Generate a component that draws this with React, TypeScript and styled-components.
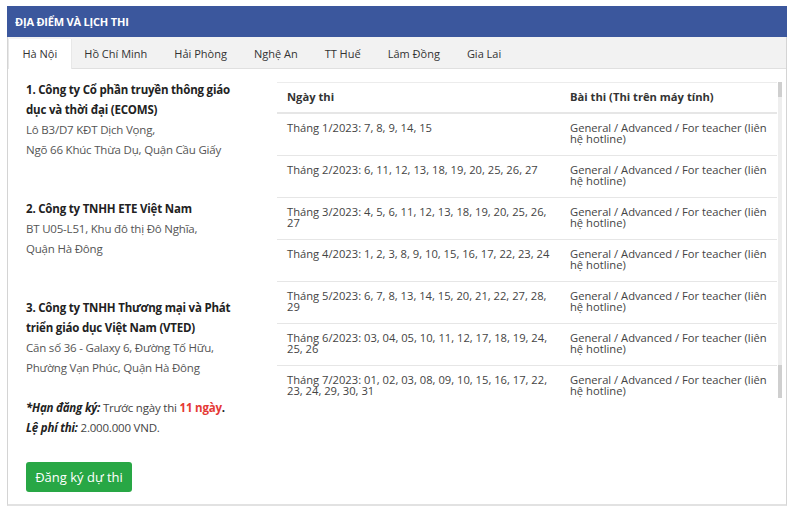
import React from 'react'
import styled, { createGlobalStyle } from 'styled-components'

const GlobalStyle = createGlobalStyle`
  body {
    margin: 0;
    background: #fff;
    font-family: 'Open Sans', 'Noto Sans', Arial, sans-serif;
  }
  * { box-sizing: border-box; }
`

const tabs = ['Hà Nội', 'Hồ Chí Minh', 'Hải Phòng', 'Nghệ An', 'TT Huế', 'Lâm Đồng', 'Gia Lai']

const places = [
  {
    name: '1. Công ty Cổ phần truyền thông giáo dục và thời đại (ECOMS)',
    lines: ['Lô B3/D7 KĐT Dịch Vọng,', 'Ngõ 66 Khúc Thừa Dụ, Quận Cầu Giấy'],
  },
  {
    name: '2. Công ty TNHH ETE Việt Nam',
    lines: ['BT U05-L51, Khu đô thị Đô Nghĩa,', 'Quận Hà Đông'],
  },
  {
    name: '3. Công ty TNHH Thương mại và Phát triển giáo dục Việt Nam (VTED)',
    lines: ['Căn số 36 - Galaxy 6, Đường Tố Hữu,', 'Phường Vạn Phúc, Quận Hà Đông'],
  },
]

const exam = 'General / Advanced / For teacher (liên hệ hotline)'

const schedule = [
  'Tháng 1/2023: 7, 8, 9, 14, 15',
  'Tháng 2/2023: 6, 11, 12, 13, 18, 19, 20, 25, 26, 27',
  'Tháng 3/2023: 4, 5, 6, 11, 12, 13, 18, 19, 20, 25, 26, 27',
  'Tháng 4/2023: 1, 2, 3, 8, 9, 10, 15, 16, 17, 22, 23, 24',
  'Tháng 5/2023: 6, 7, 8, 13, 14, 15, 20, 21, 22, 27, 28, 29',
  'Tháng 6/2023: 03, 04, 05, 10, 11, 12, 17, 18, 19, 24, 25, 26',
  'Tháng 7/2023: 01, 02, 03, 08, 09, 10, 15, 16, 17, 22, 23, 24, 29, 30, 31',
  'Tháng 8/2023: 05, 06, 07, 12, 13, 14, 19, 20, 21, 26, 27, 28',
]

export default function App() {
  return (
    <>
      <GlobalStyle />
      <Card>
        <CardHeader>ĐỊA ĐIỂM VÀ LỊCH THI</CardHeader>
        <TabBar>
          {tabs.map((tab, index) => (
            <Tab key={tab} active={index === 0}>
              {tab}
            </Tab>
          ))}
        </TabBar>
        <Body>
          <Info>
            {places.map((place, index) => (
              <Place key={place.name} last={index === places.length - 1}>
                <PlaceName>{place.name}</PlaceName>
                {place.lines.map(line => (
                  <div key={line}>{line}</div>
                ))}
              </Place>
            ))}
            <Note>
              <b>
                <i>*Hạn đăng ký:</i>
              </b>{' '}
              Trước ngày thi <Red>11 ngày</Red>
              <b>.</b>
            </Note>
            <Note>
              <b>
                <i>Lệ phí thi:</i>
              </b>{' '}
              2.000.000 VND.
            </Note>
            <RegisterButton>Đăng ký dự thi</RegisterButton>
          </Info>
          <TableWrap>
            <TableScroll>
              <Table>
                <thead>
                  <tr>
                    <Th style={{ width: 283 }}>Ngày thi</Th>
                    <Th>Bài thi (Thi trên máy tính)</Th>
                  </tr>
                </thead>
                <tbody>
                  {schedule.map(date => (
                    <tr key={date}>
                      <Td>{date}</Td>
                      <Td>{exam}</Td>
                    </tr>
                  ))}
                </tbody>
              </Table>
            </TableScroll>
            <ScrollTrack />
          </TableWrap>
        </Body>
      </Card>
    </>
  )
}

const Card = styled.div`
  width: 780px;
  margin: 6px 0 0 7px;
  border: 1px solid #d4d4d4;
  border-top: none;
  border-bottom: 2px solid #e2e2e2;
  background: #fff;
`

const CardHeader = styled.div`
  height: 31px;
  margin: 0 -1px;
  padding: 0 8px;
  display: flex;
  align-items: center;
  background: #3b579d;
  color: #fff;
  font-size: 11px;
  font-weight: 700;
  letter-spacing: -0.2px;
`

const TabBar = styled.div`
  display: flex;
  height: 32px;
  padding: 2px 0 0 1px;
  background: #f2f2f2;
  border-bottom: 1px solid #e0e0e0;
`

const Tab = styled.div<{ active?: boolean }>`
  padding: 0 13.5px 2px;
  display: flex;
  align-items: center;
  font-size: 11px;
  color: #333;
  background: ${props => (props.active ? '#fff' : 'transparent')};
  margin-bottom: -1px;
  box-shadow: ${props => (props.active ? '1px 0 0 #e8e8e8, -1px 0 0 #e8e8e8' : 'none')};
`

const Body = styled.div`
  display: flex;
  align-items: flex-start;
  padding: 11px 4px 12px 18px;
`

const Info = styled.div`
  width: 224px;
  flex-shrink: 0;
  margin-right: 27px;
  font-size: 11.5px;
  letter-spacing: -0.2px;
  line-height: 20px;
  color: #555;
`

const Place = styled.div<{ last?: boolean }>`
  margin-bottom: ${props => (props.last ? '20px' : '39px')};
`

const PlaceName = styled.div`
  font-weight: 700;
  color: #222;
`

const Note = styled.div`
  color: #444;

  b {
    color: #222;
  }
`

const Red = styled.b`
  && {
    color: #e53935;
  }
`

const RegisterButton = styled.button`
  margin-top: 24px;
  height: 30px;
  width: 106px;
  border: none;
  border-radius: 3px;
  background: #28a745;
  color: #fff;
  font-family: inherit;
  font-size: 13px;
  cursor: pointer;
`

const TableWrap = styled.div`
  flex: 1;
  position: relative;
  margin-top: 2px;
  padding-right: 5px;
`

const TableScroll = styled.div`
  max-height: 316px;
  overflow-y: auto;
  scrollbar-width: none;
  border-top: 1px solid #ececec;

  &::-webkit-scrollbar {
    display: none;
  }
`

const ScrollTrack = styled.div`
  position: absolute;
  top: 0;
  right: 0;
  bottom: 0;
  width: 4px;
  background: linear-gradient(
    to bottom,
    #cfcfcf 0,
    #cfcfcf 15px,
    #eeeeee 15px,
    #eeeeee calc(100% - 33px),
    #cfcfcf calc(100% - 33px),
    #cfcfcf 100%
  );
`

const Table = styled.table`
  width: 100%;
  border-collapse: collapse;
  font-size: 11.2px;
  color: #444;
`

const Th = styled.th`
  text-align: left;
  font-weight: 700;
  color: #333;
  padding: 8px 10px 10px;
  line-height: 11px;
  border-bottom: 2px solid #e6e6e6;
`

const Td = styled.td`
  vertical-align: top;
  padding: 8px 10px 11px;
  line-height: 11px;
  border-bottom: 1px solid #e6e6e6;
`
